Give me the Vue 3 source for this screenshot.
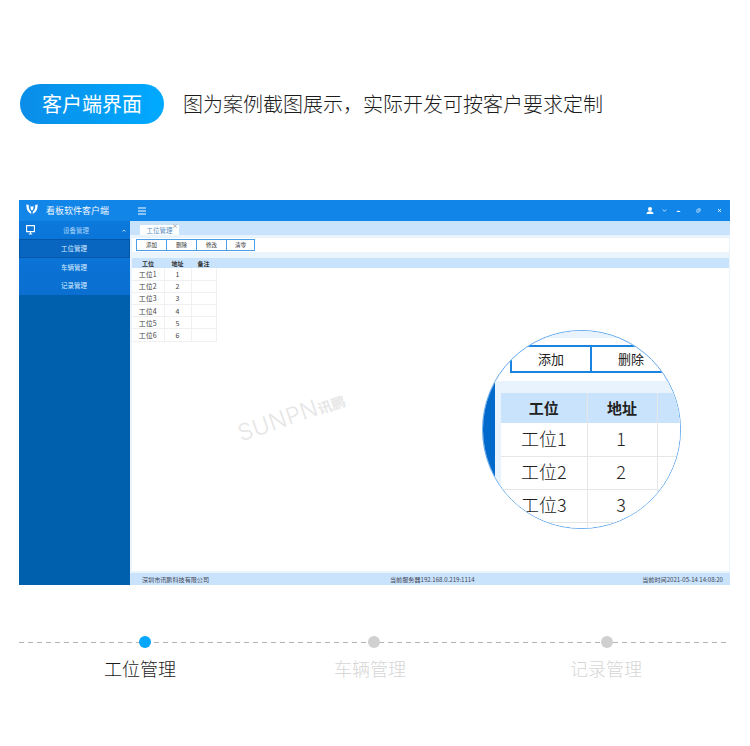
<script setup>
const menu = ['工位管理', '车辆管理', '记录管理']
const actions = ['添加', '删除', '修改', '清零']
const rows = [1, 2, 3, 4, 5, 6].map((n) => ({ name: '工位' + n, addr: n }))
const zoomRows = rows.slice(0, 4)
const steps = [
  { label: '工位管理', active: true },
  { label: '车辆管理', active: false },
  { label: '记录管理', active: false },
]
</script>

<template>
  <div class="page">
    <section class="hero">
      <div class="pill">客户端界面</div>
      <p class="hero-text">图为案例截图展示，实际开发可按客户要求定制</p>
    </section>

    <section class="window">
      <header class="topbar">
        <div class="brand">
          <svg class="logo" viewBox="0 0 12 11">
            <path d="M0.6 0C-0.2 4.2 1.4 8.2 5.2 10L5.2 7.6C3.4 6.4 2.4 3.6 2.9 0.6C2.2 1.4 1.4 1.2 0.6 0Z M11.4 0C12.2 4.2 10.6 8.2 6.8 10L6.8 7.6C8.6 6.4 9.6 3.6 9.1 0.6C9.8 1.4 10.6 1.2 11.4 0Z M4.4 1.6L6 3L7.6 1.6L7.2 5.4L6 6.6L4.8 5.4Z" fill="#fff" />
          </svg>
          <span>看板软件客户端</span>
        </div>
        <svg class="burger" viewBox="0 0 8 8"><path d="M0 1h8M0 4h8M0 7h8" stroke="#fff" stroke-width="1.1" /></svg>
        <div class="win-tools">
          <svg class="ico-user" viewBox="0 0 8 7"><circle cx="4" cy="2" r="2" fill="#fff" /><path d="M0.5 7C0.5 5 2 4.2 4 4.2S7.5 5 7.5 7Z" fill="#fff" /></svg>
          <svg class="ico-s t-chev" viewBox="0 0 5 5"><path d="M0.8 1.6L2.5 3.3L4.2 1.6" fill="none" stroke="#d5ebff" stroke-width="0.9" /></svg>
          <svg class="ico-s t-min" viewBox="0 0 5 5"><path d="M0.8 3.4H4.2" stroke="#fff" stroke-width="1.1" /></svg>
          <svg class="ico-s t-max" viewBox="0 0 5 5"><path d="M1.8 0.8H4.2V3.2M0.8 1.8H3.2V4.2H0.8Z" fill="none" stroke="#d5ebff" stroke-width="0.7" /></svg>
          <svg class="ico-s t-close" viewBox="0 0 5 5"><path d="M1 1L4 4M4 1L1 4" stroke="#e8f4ff" stroke-width="0.9" /></svg>
        </div>
      </header>

      <div class="body">
        <aside class="sidebar">
          <div class="nav-block">
            <div class="group">
              <svg class="monitor" viewBox="0 0 9 10"><path d="M0.6 0.6H8.4V6.6H0.6Z" fill="none" stroke="#fff" stroke-width="1.1" /><path d="M2.8 9H6.2M4.5 7V9" stroke="#fff" stroke-width="1.1" /></svg>
              <span>设备管理</span>
              <svg class="caret" viewBox="0 0 4 3"><path d="M0.5 2.4L2 1L3.5 2.4" fill="none" stroke="#fff" stroke-width="0.7" /></svg>
            </div>
            <div v-for="(item, i) in menu" :key="item" class="sub-item" :class="{ current: i === 0 }">{{ item }}</div>
          </div>
        </aside>

        <main class="main">
          <div class="tabs">
            <div class="tab">工位管理<span class="tab-x">×</span></div>
          </div>
          <div class="toolbar">
            <button v-for="a in actions" :key="a" class="act">{{ a }}</button>
          </div>
          <div class="workspace">
            <table class="grid">
              <thead>
                <tr><th class="c1">工位</th><th class="c2">地址</th><th class="c3">备注</th><th></th></tr>
              </thead>
              <tbody>
                <tr v-for="r in rows" :key="r.addr"><td>{{ r.name }}</td><td>{{ r.addr }}</td><td></td><td class="blank"></td></tr>
              </tbody>
            </table>
            <div class="watermark">SUNPN<span>讯鹏</span></div>
          </div>
          <footer class="status">
            <span>深圳市讯鹏科技有限公司</span>
            <span class="server">当前服务器192.168.0.219:1114</span>
            <span class="time">当前时间2021-05-14 14:08:20</span>
          </footer>
        </main>
      </div>
    </section>

    <div class="lens">
      <div class="lens-top">
        <div class="lens-bar">
          <span class="lens-btn">添加</span>
          <span class="lens-btn">删除</span>
          <span class="lens-btn"></span>
        </div>
      </div>
      <div class="lens-bottom">
        <div class="lens-side"></div>
        <div class="lens-panel">
          <table class="lens-grid">
            <thead><tr><th class="l1">工位</th><th class="l2">地址</th><th></th></tr></thead>
            <tbody>
              <tr v-for="r in zoomRows" :key="r.addr"><td>{{ r.addr === 4 ? '' : r.name }}</td><td class="lens-num">{{ r.addr === 4 ? '' : r.addr }}</td><td></td></tr>
            </tbody>
          </table>
        </div>
      </div>
    </div>

    <section class="steps">
      <div v-for="s in steps" :key="s.label" class="step" :class="{ on: s.active }">
        <i class="dot"></i>
        <span class="step-label">{{ s.label }}</span>
      </div>
    </section>
  </div>
</template>

<style>
html, body { margin: 0; background: #fff; }
</style>

<style scoped>
.page {
  position: relative;
  width: 750px;
  height: 746px;
  overflow: hidden;
  padding-top: 84px;
  box-sizing: border-box;
  font-family: "Noto Sans CJK SC", "Liberation Sans", sans-serif;
  color: #333;
}
.hero { display: flex; align-items: center; margin-left: 20px; height: 40px; }
.pill {
  width: 144px; height: 40px; border-radius: 20px;
  background: linear-gradient(90deg, #0a8de8, #00aaff);
  color: #fff; font-size: 20px; line-height: 40px; text-align: center;
}
.hero-text { margin: 0 0 0 19px; font-size: 20px; line-height: 40px; color: #1c1c1c; font-weight: 300; }

.window { margin: 76px 0 0 19px; width: 711px; height: 385px; display: flex; flex-direction: column; }
.topbar { height: 21px; background: #1285e8; display: flex; align-items: center; color: #fff; }
.brand { width: 111px; display: flex; align-items: center; font-size: 9px; color: #f0f8ff; }
.logo { width: 12px; height: 11px; margin: -3px 8px 0 7px; }
.burger { width: 8px; height: 8px; margin-left: 8px; }
.win-tools { margin-left: auto; display: flex; align-items: center; padding-right: 8px; }
.ico-user { width: 8px; height: 7px; }
.ico-s { width: 5px; height: 5px; }
.t-chev { margin-left: 8px; }
.t-min { margin-left: 9px; }
.t-max { margin-left: 15px; }
.t-close { margin-left: 16px; }

.body { flex: 1; display: flex; min-height: 0; }
.sidebar { width: 111px; background: #0060ae; flex: none; }
.nav-block { background: linear-gradient(180deg, #0b78dc, #0a6fd0); }
.group { height: 18px; display: flex; align-items: center; color: #a9d3f7; font-size: 6.5px; }
.group span { margin-left: 28px; }
.monitor { width: 9px; height: 10px; margin-left: 7px; margin-top: -1px; }
.caret { width: 4px; height: 3px; margin-left: auto; margin-right: 4px; }
.sub-item { height: 18.6px; line-height: 18.6px; text-align: center; color: #d8ecff; font-size: 6.5px; box-sizing: border-box; padding-right: 1px; }
.sub-item.current { background: #0866c0; border: 1px solid #0558a8; line-height: 16.6px; }

.main { flex: 1; min-width: 0; display: flex; flex-direction: column; background: #eaf4fd; }
.tabs { height: 14px; background: #c8e3fb; padding: 4px 0 0 10px; box-sizing: border-box; flex: none; }
.tab { position: relative; width: 39px; height: 10px; background: #fff; font-size: 6.5px; line-height: 11px; text-align: center; color: #5a8fc0; }
.tab-x { position: absolute; right: 1px; top: -2px; font-size: 6px; line-height: 6px; color: #777; }
.toolbar { margin: 3px 1px 0 2px; padding: 1px 0 0 4px; height: 14px; box-sizing: border-box; background: #fff; display: flex; flex: none; }
.act {
  width: 30px; height: 12px; margin: 0; padding: 0;
  background: #fff; border: 1px solid #4a9fe8; border-right-width: 0;
  font: 5.5px/10px "Noto Sans CJK SC", sans-serif; color: #333;
  box-sizing: border-box;
}
.act:last-child { width: 29px; border-right-width: 1px; }
.workspace { flex: 1; position: relative; min-height: 0; margin: 6px 1px 2px 2px; background: #fff; }
.grid { width: 100%; border-collapse: collapse; table-layout: fixed; font-size: 7px; }
.grid th { height: 10px; padding: 0; background: #c8e3fb; color: #333; font-size: 6px; font-weight: 700; }
.grid td { height: 12.2px; padding: 0; text-align: center; color: #444; border-right: 1px solid #f0f0f0; border-bottom: 1px solid #f0f0f0; box-sizing: border-box; line-height: 10px; }
.grid td.blank { border: 0; }
.c1 { width: 32px; }
.c2 { width: 27px; }
.c3 { width: 25px; }
.watermark {
  position: absolute; left: 107px; top: 163px;
  font: 300 23px/26px Inter, "Liberation Sans", sans-serif;
  letter-spacing: 0.5px; color: #e6e6e6;
  transform: rotate(-19deg);
  transform-origin: left center;
  white-space: nowrap;
}
.watermark span { font-family: "Noto Sans CJK SC", sans-serif; font-size: 14px; font-weight: 700; letter-spacing: 0; }
.status { height: 12px; background: #c8e3fb; display: flex; align-items: center; font-size: 6.1px; color: #445; padding: 0 7px 0 12px; flex: none; }
.server { margin-left: 181px; }
.time { margin-left: auto; }

.lens {
  position: absolute; left: 482px; top: 330px;
  width: 199px; height: 199px; box-sizing: border-box;
  border-radius: 50%; border: 1.5px solid #64a9ee;
  background: #fff; overflow: hidden; display: flex; flex-direction: column;
}
.lens-top { height: 50px; flex: none; padding-left: 13px; box-sizing: border-box; border-top: 7px solid #e8f3fd; }
.lens-bar { padding: 7px 0 0 14px; display: flex; }
.lens-btn {
  width: 80px; height: 28px; box-sizing: border-box; flex: none;
  border: 2px solid #1a83e0; border-right-width: 0;
  text-align: center; font-size: 13px; line-height: 24px; color: #222;
}
.lens-bottom { flex: 1; display: flex; min-height: 0; }
.lens-side { width: 12px; background: #0069cc; flex: none; }
.lens-panel { flex: 1; background: #e8f3fd; padding: 12px 0 0 6px; min-width: 0; }
.lens-grid { width: 200px; background: #fff; border-collapse: collapse; table-layout: fixed; font-size: 18px; }
.lens-grid th { height: 30px; padding: 0 0 2px; box-sizing: border-box; background: #c8e3fb; border-right: 1px solid #e6e6e6; font-size: 15px; font-weight: 700; color: #222; }
.lens-grid td { height: 33px; padding: 0 0 3px; box-sizing: border-box; text-align: center; border-right: 1px solid #e6e6e6; border-bottom: 1px solid #e6e6e6; color: #222; font-weight: 300; }
.lens-grid td.lens-num { padding-right: 2px; }
.l1 { width: 86px; }
.l2 { width: 70px; }

.steps { position: absolute; left: 19px; top: 636px; width: 711px; height: 50px; }
.steps::before {
  content: ""; position: absolute; left: 0; right: 0; top: 6px; height: 1px;
  background: repeating-linear-gradient(90deg, #b4b4b4 0 5px, transparent 5px 9px);
}
.step { position: absolute; top: 0; width: 100px; display: flex; flex-direction: column; align-items: center; }
.step:nth-child(1) { left: 71px; }
.step:nth-child(2) { left: 301px; }
.step:nth-child(3) { left: 537px; }
.dot { width: 12px; height: 12px; border-radius: 50%; background: #d0d0d0; position: relative; margin-left: 10px; }
.step:nth-child(2) .dot { margin-left: 8px; }
.step:nth-child(3) .dot { margin-left: 2px; }
.step.on .dot { background: #05a6fb; }
.step-label { margin-top: 8px; font-size: 18px; line-height: 24px; color: #d6d6d6; white-space: nowrap; font-weight: 300; }
.step.on .step-label { color: #1c1c1c; }
</style>
